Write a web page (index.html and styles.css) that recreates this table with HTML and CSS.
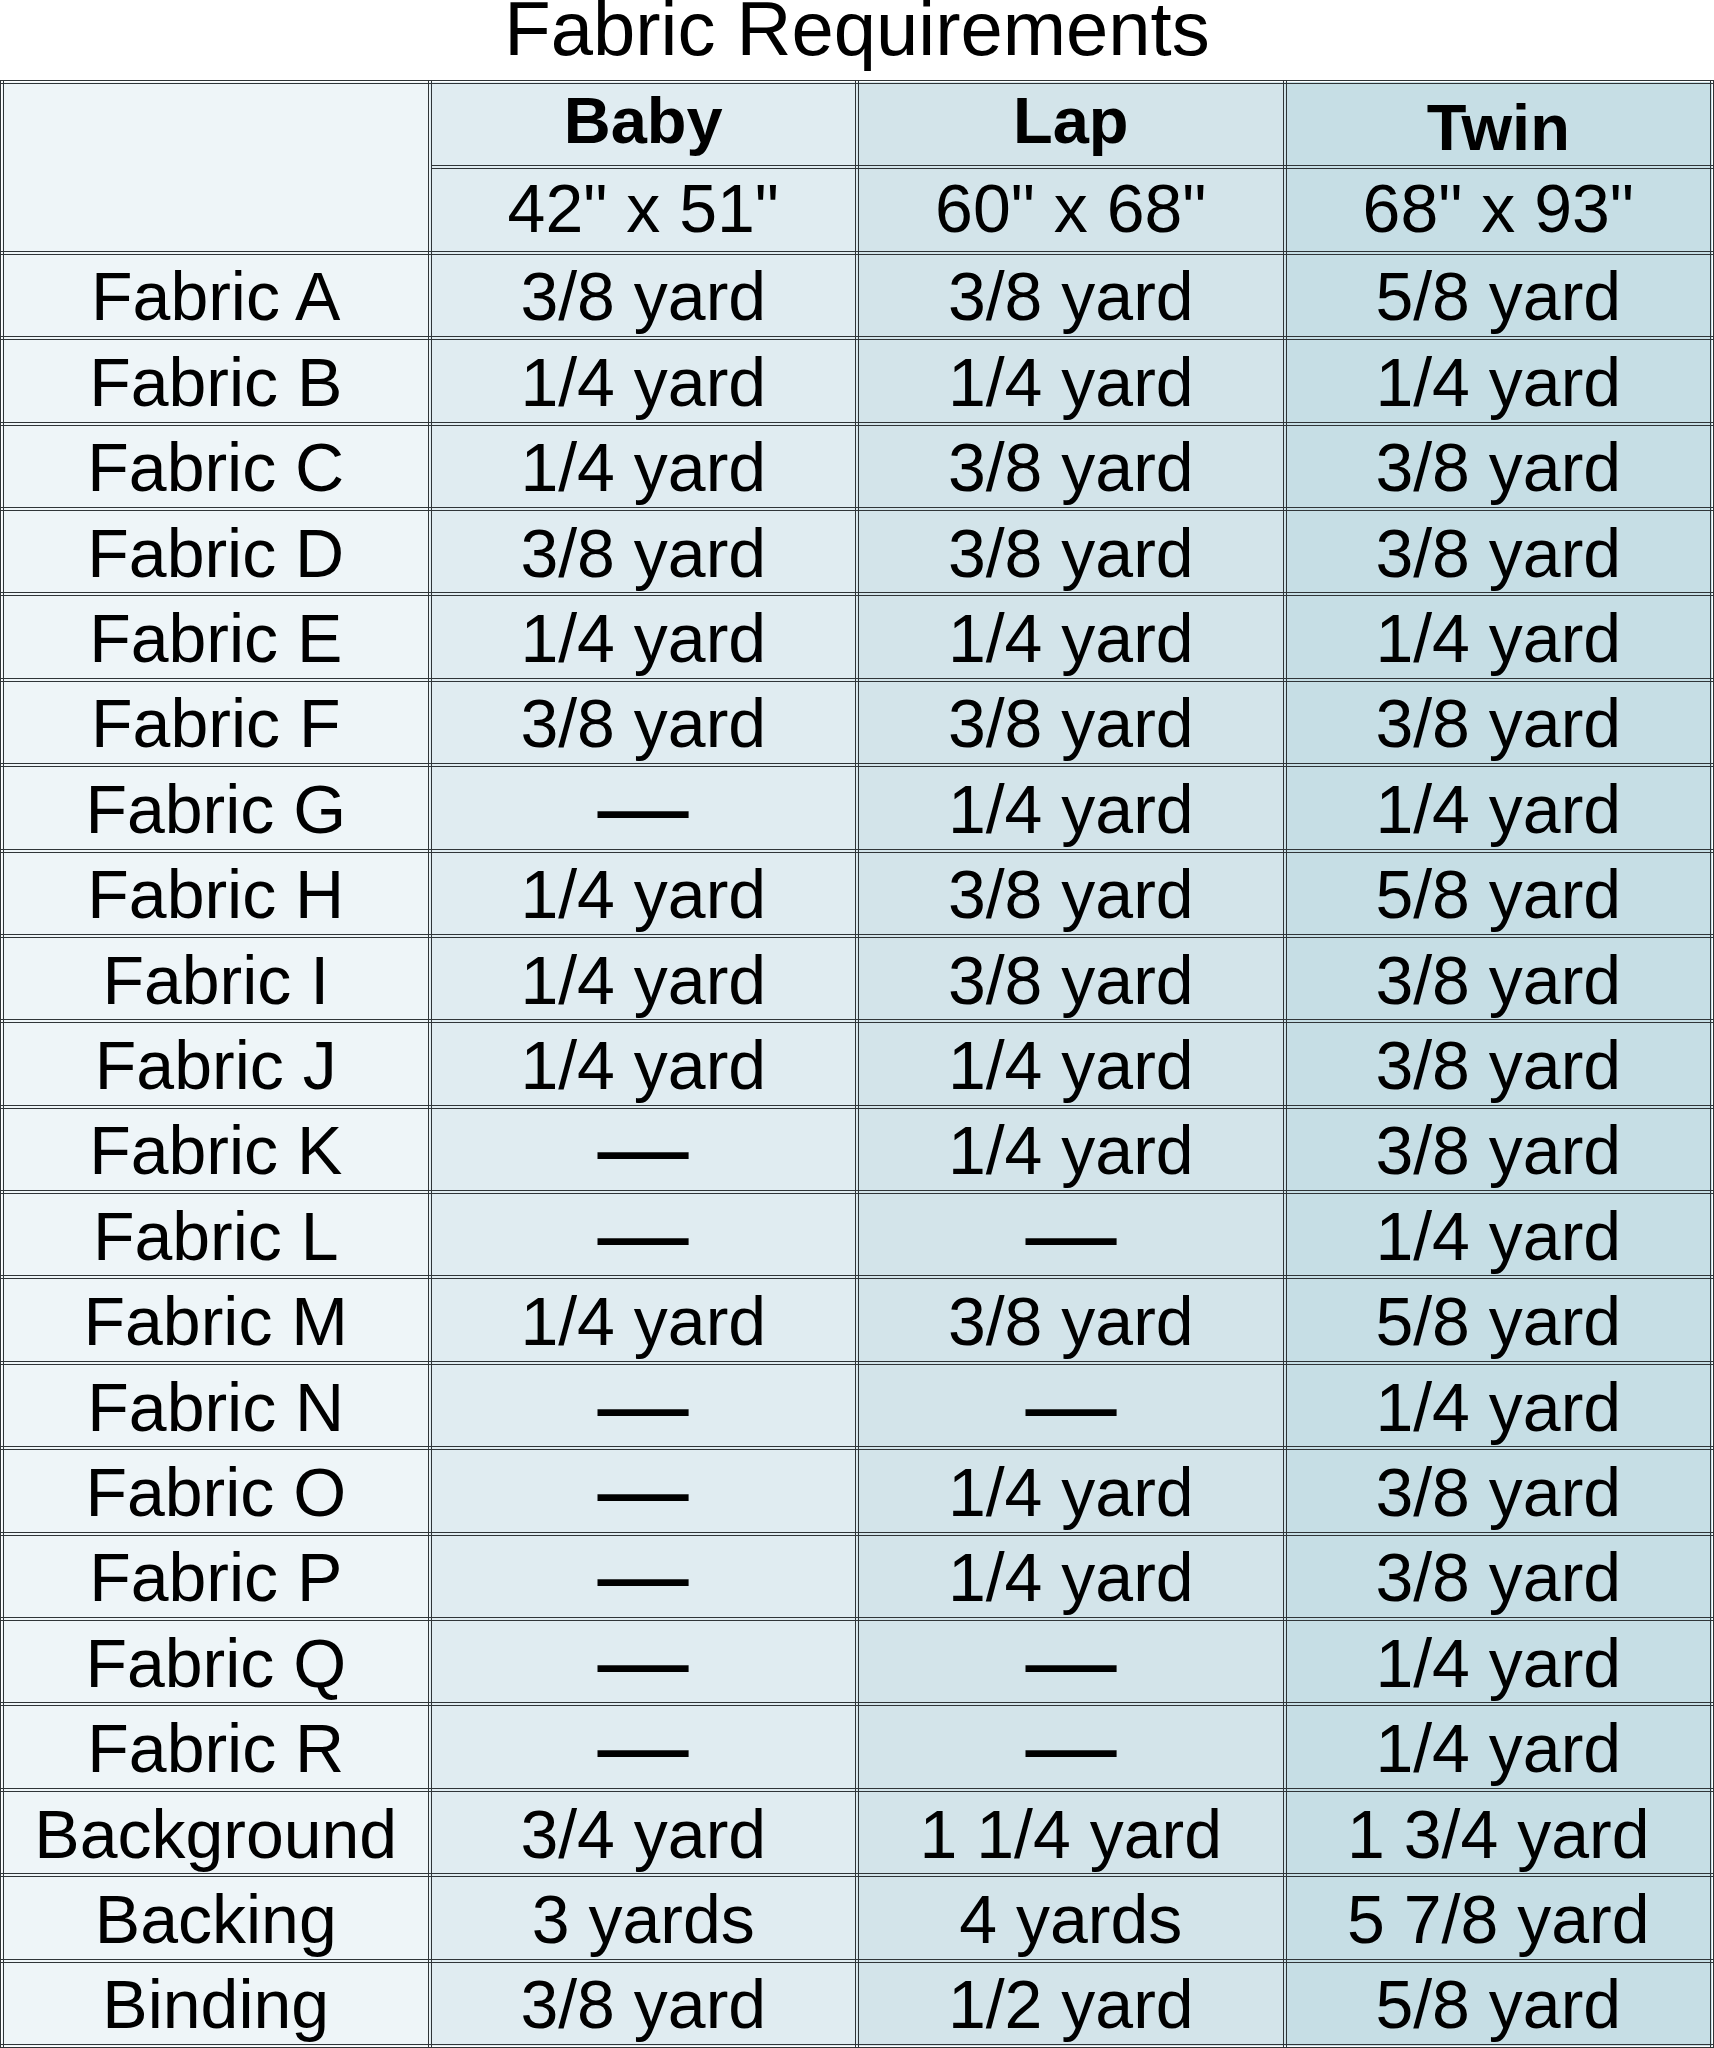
FILE: index.html
```html
<!DOCTYPE html>
<html>
<head>
<meta charset="utf-8">
<link rel="stylesheet" href="styles.css">
</head>
<body>
<h1 class="title">Fabric Requirements</h1>
<table class="req">
  <colgroup>
    <col class="c0"><col class="c1"><col class="c2"><col class="c3">
  </colgroup>
  <thead>
    <tr class="row">
      <th class="blank" rowspan="2"></th>
      <th class="size baby">Baby</th>
      <th class="size lap">Lap</th>
      <th class="size twin">Twin</th>
    </tr>
    <tr class="row">
      <td class="dim baby">42" x 51"</td>
      <td class="dim lap">60" x 68"</td>
      <td class="dim twin">68" x 93"</td>
    </tr>
  </thead>
  <tbody>
    <tr class="row"><td class="name">Fabric A</td><td class="baby">3/8 yard</td><td class="lap">3/8 yard</td><td class="twin">5/8 yard</td></tr>
    <tr class="row"><td class="name">Fabric B</td><td class="baby">1/4 yard</td><td class="lap">1/4 yard</td><td class="twin">1/4 yard</td></tr>
    <tr class="row"><td class="name">Fabric C</td><td class="baby">1/4 yard</td><td class="lap">3/8 yard</td><td class="twin">3/8 yard</td></tr>
    <tr class="row"><td class="name">Fabric D</td><td class="baby">3/8 yard</td><td class="lap">3/8 yard</td><td class="twin">3/8 yard</td></tr>
    <tr class="row"><td class="name">Fabric E</td><td class="baby">1/4 yard</td><td class="lap">1/4 yard</td><td class="twin">1/4 yard</td></tr>
    <tr class="row"><td class="name">Fabric F</td><td class="baby">3/8 yard</td><td class="lap">3/8 yard</td><td class="twin">3/8 yard</td></tr>
    <tr class="row"><td class="name">Fabric G</td><td class="baby"><span class="dash">—</span></td><td class="lap">1/4 yard</td><td class="twin">1/4 yard</td></tr>
    <tr class="row"><td class="name">Fabric H</td><td class="baby">1/4 yard</td><td class="lap">3/8 yard</td><td class="twin">5/8 yard</td></tr>
    <tr class="row"><td class="name">Fabric I</td><td class="baby">1/4 yard</td><td class="lap">3/8 yard</td><td class="twin">3/8 yard</td></tr>
    <tr class="row"><td class="name">Fabric J</td><td class="baby">1/4 yard</td><td class="lap">1/4 yard</td><td class="twin">3/8 yard</td></tr>
    <tr class="row"><td class="name">Fabric K</td><td class="baby"><span class="dash">—</span></td><td class="lap">1/4 yard</td><td class="twin">3/8 yard</td></tr>
    <tr class="row"><td class="name">Fabric L</td><td class="baby"><span class="dash">—</span></td><td class="lap"><span class="dash">—</span></td><td class="twin">1/4 yard</td></tr>
    <tr class="row"><td class="name">Fabric M</td><td class="baby">1/4 yard</td><td class="lap">3/8 yard</td><td class="twin">5/8 yard</td></tr>
    <tr class="row"><td class="name">Fabric N</td><td class="baby"><span class="dash">—</span></td><td class="lap"><span class="dash">—</span></td><td class="twin">1/4 yard</td></tr>
    <tr class="row"><td class="name">Fabric O</td><td class="baby"><span class="dash">—</span></td><td class="lap">1/4 yard</td><td class="twin">3/8 yard</td></tr>
    <tr class="row"><td class="name">Fabric P</td><td class="baby"><span class="dash">—</span></td><td class="lap">1/4 yard</td><td class="twin">3/8 yard</td></tr>
    <tr class="row"><td class="name">Fabric Q</td><td class="baby"><span class="dash">—</span></td><td class="lap"><span class="dash">—</span></td><td class="twin">1/4 yard</td></tr>
    <tr class="row"><td class="name">Fabric R</td><td class="baby"><span class="dash">—</span></td><td class="lap"><span class="dash">—</span></td><td class="twin">1/4 yard</td></tr>
    <tr class="row"><td class="name">Background</td><td class="baby">3/4 yard</td><td class="lap">1 1/4 yard</td><td class="twin">1 3/4 yard</td></tr>
    <tr class="row"><td class="name">Backing</td><td class="baby">3 yards</td><td class="lap">4 yards</td><td class="twin">5 7/8 yard</td></tr>
    <tr class="row"><td class="name">Binding</td><td class="baby">3/8 yard</td><td class="lap">1/2 yard</td><td class="twin">5/8 yard</td></tr>
  </tbody>
</table>
</body>
</html>
```

FILE: styles.css
```css
html, body {
  margin: 0;
  padding: 0;
  background: #ffffff;
}

body {
  display: flow-root;
  font-family: "Liberation Sans", Arial, Helvetica, sans-serif;
  color: #000;
  width: 1714px;
}

.title {
  margin: -15px 0 8px 0;
  font-size: 76px;
  font-weight: normal;
  line-height: normal;
  text-align: center;
}

.req {
  width: 1714px;
  table-layout: fixed;
  border-collapse: collapse;
}

.c0, .c1, .c2, .c3 {
  width: 25%;
}

.req th,
.req td {
  border: 4px double #2f3538;
  padding: 2px 0 0 0;
  text-align: center;
  vertical-align: middle;
  font-size: 68px;
  font-weight: normal;
  line-height: 74px;
  white-space: nowrap;
}

.row {
  height: 85.4px;
}

.blank,
.name {
  background: #eef5f8;
}

.baby {
  background: #e0ecf1;
}

.lap {
  background: #d3e4ea;
}

.twin {
  background: #c6dee5;
}

.req .size {
  font-weight: bold;
  font-size: 65px;
  padding: 0 0 7px 0;
}

.req .size.twin {
  padding: 7px 0 0 0;
}

.req .dim {
  padding: 0 0 5px 0;
}

.dash {
  display: inline-block;
  font-weight: bold;
  transform: scaleX(1.34);
}
```
